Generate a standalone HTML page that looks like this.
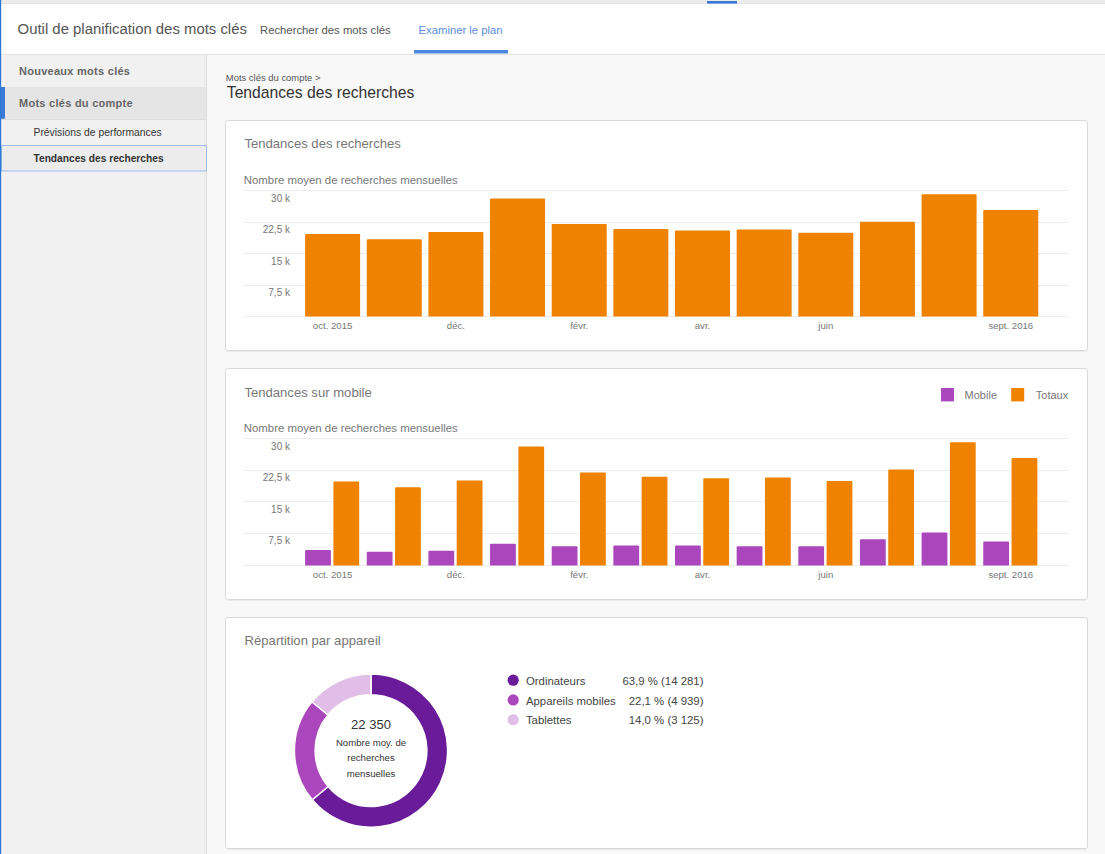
<!DOCTYPE html>
<html><head><meta charset="utf-8"><style>
html,body{margin:0;padding:0;background:#f8f8f8;overflow:hidden}
svg{display:block}
text{font-family:"Liberation Sans",sans-serif}
</style></head><body>
<svg width="1105" height="854" viewBox="0 0 1105 854">

<rect x="0" y="0" width="1105" height="854" fill="#f8f8f8"/>
<rect x="0" y="0" width="1105" height="3" fill="#ececec"/>
<rect x="0" y="3" width="1105" height="1" fill="#e3e3e3"/>
<rect x="707" y="1" width="30" height="2.6" fill="#3a78d8"/>
<rect x="0" y="4" width="1105" height="50" fill="#ffffff"/>
<rect x="0" y="54" width="1105" height="1" fill="#e4e4e4"/>
<text x="17.6" y="33.8" font-size="14.9" fill="#555">Outil de planification des mots clés</text>
<text x="260" y="34.2" font-size="11.3" fill="#555">Rechercher des mots clés</text>
<text x="418.5" y="34.2" font-size="11.3" fill="#5b8ee0">Examiner le plan</text>
<rect x="414" y="50" width="94" height="3.5" fill="#4a87de"/>
<rect x="0" y="55" width="206" height="799" fill="#f1f1f1"/>
<rect x="1" y="55" width="2" height="799" fill="#f6f5f3"/>
<rect x="204" y="55" width="2" height="799" fill="#ececec"/>
<rect x="206" y="55" width="1" height="799" fill="#dedede"/>
<rect x="1" y="87" width="205" height="32" fill="#e5e5e5"/>
<rect x="1" y="119" width="205" height="1" fill="#dcdcdc"/>
<text x="19" y="74.7" font-size="11" font-weight="bold" letter-spacing="0.27" fill="#666">Nouveaux mots clés</text>
<text x="19" y="106.7" font-size="11" font-weight="bold" letter-spacing="0.27" fill="#666">Mots clés du compte</text>
<text x="33.5" y="135.7" font-size="10.35" fill="#333">Prévisions de performances</text>
<rect x="1.5" y="145.5" width="205" height="25.5" fill="#ececec" stroke="#9dbbec" stroke-width="1"/>
<text x="33.5" y="161.8" font-size="10.2" font-weight="bold" fill="#333">Tendances des recherches</text>
<rect x="0" y="87" width="5" height="31.5" fill="#3a7bd5"/>
<rect x="0" y="87" width="5" height="31.5" fill="#3a7bd5"/>
<rect x="0" y="0" width="1.2" height="854" fill="#2a78d8"/>
<text x="225.8" y="81.3" font-size="9.45" fill="#555">Mots clés du compte &gt;</text>
<text x="226.8" y="98.3" font-size="15.7" fill="#333">Tendances des recherches</text>
<rect x="225.5" y="120.5" width="862" height="230" rx="2" fill="#fff" stroke="#d9d9d9" stroke-width="1"/>
<rect x="227" y="351" width="859" height="1" fill="#ececec"/>
<text x="244.4" y="148.3" font-size="13.1" fill="#777">Tendances des recherches</text>
<text x="243.8" y="184" font-size="11.4" fill="#777">Nombre moyen de recherches mensuelles</text>
<rect x="244" y="190" width="824.5" height="1" fill="#ececec"/>
<rect x="244" y="222" width="824.5" height="1" fill="#ececec"/>
<rect x="244" y="253" width="824.5" height="1" fill="#ececec"/>
<rect x="244" y="285" width="824.5" height="1" fill="#ececec"/>
<rect x="244" y="316" width="824.5" height="1" fill="#ececec"/>
<text x="290" y="201.5" font-size="10" fill="#777" text-anchor="end">30 k</text>
<text x="290" y="233" font-size="10" fill="#777" text-anchor="end">22,5 k</text>
<text x="290" y="264.5" font-size="10" fill="#777" text-anchor="end">15 k</text>
<text x="290" y="296" font-size="10" fill="#777" text-anchor="end">7,5 k</text>
<path d="M305.10,316.5 V235 Q305.10,234 306.10,234 H359.10 Q360.10,234 360.10,235 V316.5 Z" fill="#ef8200"/>
<path d="M366.75,316.5 V240.2 Q366.75,239.2 367.75,239.2 H420.75 Q421.75,239.2 421.75,240.2 V316.5 Z" fill="#ef8200"/>
<path d="M428.40,316.5 V233.1 Q428.40,232.1 429.40,232.1 H482.40 Q483.40,232.1 483.40,233.1 V316.5 Z" fill="#ef8200"/>
<path d="M490.05,316.5 V199.5 Q490.05,198.5 491.05,198.5 H544.05 Q545.05,198.5 545.05,199.5 V316.5 Z" fill="#ef8200"/>
<path d="M551.70,316.5 V225 Q551.70,224 552.70,224 H605.70 Q606.70,224 606.70,225 V316.5 Z" fill="#ef8200"/>
<path d="M613.35,316.5 V229.9 Q613.35,228.9 614.35,228.9 H667.35 Q668.35,228.9 668.35,229.9 V316.5 Z" fill="#ef8200"/>
<path d="M675.00,316.5 V231.5 Q675.00,230.5 676.00,230.5 H729.00 Q730.00,230.5 730.00,231.5 V316.5 Z" fill="#ef8200"/>
<path d="M736.65,316.5 V230.5 Q736.65,229.5 737.65,229.5 H790.65 Q791.65,229.5 791.65,230.5 V316.5 Z" fill="#ef8200"/>
<path d="M798.30,316.5 V233.8 Q798.30,232.8 799.30,232.8 H852.30 Q853.30,232.8 853.30,233.8 V316.5 Z" fill="#ef8200"/>
<path d="M859.95,316.5 V222.7 Q859.95,221.7 860.95,221.7 H913.95 Q914.95,221.7 914.95,222.7 V316.5 Z" fill="#ef8200"/>
<path d="M921.60,316.5 V195.3 Q921.60,194.3 922.60,194.3 H975.60 Q976.60,194.3 976.60,195.3 V316.5 Z" fill="#ef8200"/>
<path d="M983.25,316.5 V211 Q983.25,210 984.25,210 H1037.25 Q1038.25,210 1038.25,211 V316.5 Z" fill="#ef8200"/>
<text x="332.6" y="329.3" font-size="9.6" fill="#777" text-anchor="middle">oct. 2015</text>
<text x="455.9" y="329.3" font-size="9.6" fill="#777" text-anchor="middle">déc.</text>
<text x="579.2" y="329.3" font-size="9.6" fill="#777" text-anchor="middle">févr.</text>
<text x="702.5" y="329.3" font-size="9.6" fill="#777" text-anchor="middle">avr.</text>
<text x="825.8" y="329.3" font-size="9.6" fill="#777" text-anchor="middle">juin</text>
<text x="1010.8" y="329.3" font-size="9.6" fill="#777" text-anchor="middle">sept. 2016</text>
<rect x="225.5" y="368.5" width="862" height="231" rx="2" fill="#fff" stroke="#d9d9d9" stroke-width="1"/>
<rect x="227" y="600" width="859" height="1" fill="#ececec"/>
<text x="244.4" y="396.8" font-size="13.1" fill="#777">Tendances sur mobile</text>
<text x="243.8" y="432" font-size="11.4" fill="#777">Nombre moyen de recherches mensuelles</text>
<rect x="244" y="438" width="824.5" height="1" fill="#ececec"/>
<rect x="244" y="470" width="824.5" height="1" fill="#ececec"/>
<rect x="244" y="501" width="824.5" height="1" fill="#ececec"/>
<rect x="244" y="533" width="824.5" height="1" fill="#ececec"/>
<rect x="244" y="565" width="824.5" height="1" fill="#ececec"/>
<text x="290" y="449.5" font-size="10" fill="#777" text-anchor="end">30 k</text>
<text x="290" y="481" font-size="10" fill="#777" text-anchor="end">22,5 k</text>
<text x="290" y="512.5" font-size="10" fill="#777" text-anchor="end">15 k</text>
<text x="290" y="544" font-size="10" fill="#777" text-anchor="end">7,5 k</text>
<path d="M305.10,565.5 V550.9 Q305.10,549.9 306.10,549.9 H329.90 Q330.90,549.9 330.90,550.9 V565.5 Z" fill="#ab47bc"/>
<path d="M333.40,565.5 V482.5 Q333.40,481.5 334.40,481.5 H358.20 Q359.20,481.5 359.20,482.5 V565.5 Z" fill="#ef8200"/>
<path d="M366.75,565.5 V552.7 Q366.75,551.7 367.75,551.7 H391.55 Q392.55,551.7 392.55,552.7 V565.5 Z" fill="#ab47bc"/>
<path d="M395.05,565.5 V488.2 Q395.05,487.2 396.05,487.2 H419.85 Q420.85,487.2 420.85,488.2 V565.5 Z" fill="#ef8200"/>
<path d="M428.40,565.5 V551.8 Q428.40,550.8 429.40,550.8 H453.20 Q454.20,550.8 454.20,551.8 V565.5 Z" fill="#ab47bc"/>
<path d="M456.70,565.5 V481.4 Q456.70,480.4 457.70,480.4 H481.50 Q482.50,480.4 482.50,481.4 V565.5 Z" fill="#ef8200"/>
<path d="M490.05,565.5 V544.8 Q490.05,543.8 491.05,543.8 H514.85 Q515.85,543.8 515.85,544.8 V565.5 Z" fill="#ab47bc"/>
<path d="M518.35,565.5 V447.6 Q518.35,446.6 519.35,446.6 H543.15 Q544.15,446.6 544.15,447.6 V565.5 Z" fill="#ef8200"/>
<path d="M551.70,565.5 V547.2 Q551.70,546.2 552.70,546.2 H576.50 Q577.50,546.2 577.50,547.2 V565.5 Z" fill="#ab47bc"/>
<path d="M580.00,565.5 V473.4 Q580.00,472.4 581.00,472.4 H604.80 Q605.80,472.4 605.80,473.4 V565.5 Z" fill="#ef8200"/>
<path d="M613.35,565.5 V546.4 Q613.35,545.4 614.35,545.4 H638.15 Q639.15,545.4 639.15,546.4 V565.5 Z" fill="#ab47bc"/>
<path d="M641.65,565.5 V477.7 Q641.65,476.7 642.65,476.7 H666.45 Q667.45,476.7 667.45,477.7 V565.5 Z" fill="#ef8200"/>
<path d="M675.00,565.5 V546.4 Q675.00,545.4 676.00,545.4 H699.80 Q700.80,545.4 700.80,546.4 V565.5 Z" fill="#ab47bc"/>
<path d="M703.30,565.5 V479.3 Q703.30,478.3 704.30,478.3 H728.10 Q729.10,478.3 729.10,479.3 V565.5 Z" fill="#ef8200"/>
<path d="M736.65,565.5 V547.2 Q736.65,546.2 737.65,546.2 H761.45 Q762.45,546.2 762.45,547.2 V565.5 Z" fill="#ab47bc"/>
<path d="M764.95,565.5 V478.5 Q764.95,477.5 765.95,477.5 H789.75 Q790.75,477.5 790.75,478.5 V565.5 Z" fill="#ef8200"/>
<path d="M798.30,565.5 V547.2 Q798.30,546.2 799.30,546.2 H823.10 Q824.10,546.2 824.10,547.2 V565.5 Z" fill="#ab47bc"/>
<path d="M826.60,565.5 V482 Q826.60,481 827.60,481 H851.40 Q852.40,481 852.40,482 V565.5 Z" fill="#ef8200"/>
<path d="M859.95,565.5 V540.2 Q859.95,539.2 860.95,539.2 H884.75 Q885.75,539.2 885.75,540.2 V565.5 Z" fill="#ab47bc"/>
<path d="M888.25,565.5 V470.6 Q888.25,469.6 889.25,469.6 H913.05 Q914.05,469.6 914.05,470.6 V565.5 Z" fill="#ef8200"/>
<path d="M921.60,565.5 V533.4 Q921.60,532.4 922.60,532.4 H946.40 Q947.40,532.4 947.40,533.4 V565.5 Z" fill="#ab47bc"/>
<path d="M949.90,565.5 V443.2 Q949.90,442.2 950.90,442.2 H974.70 Q975.70,442.2 975.70,443.2 V565.5 Z" fill="#ef8200"/>
<path d="M983.25,565.5 V542.6 Q983.25,541.6 984.25,541.6 H1008.05 Q1009.05,541.6 1009.05,542.6 V565.5 Z" fill="#ab47bc"/>
<path d="M1011.55,565.5 V459 Q1011.55,458 1012.55,458 H1036.35 Q1037.35,458 1037.35,459 V565.5 Z" fill="#ef8200"/>
<text x="332.6" y="578.0" font-size="9.6" fill="#777" text-anchor="middle">oct. 2015</text>
<text x="455.9" y="578.0" font-size="9.6" fill="#777" text-anchor="middle">déc.</text>
<text x="579.2" y="578.0" font-size="9.6" fill="#777" text-anchor="middle">févr.</text>
<text x="702.5" y="578.0" font-size="9.6" fill="#777" text-anchor="middle">avr.</text>
<text x="825.8" y="578.0" font-size="9.6" fill="#777" text-anchor="middle">juin</text>
<text x="1010.8" y="578.0" font-size="9.6" fill="#777" text-anchor="middle">sept. 2016</text>
<rect x="941" y="388" width="13" height="13.4" fill="#ab47bc"/>
<text x="964.6" y="398.9" font-size="11" fill="#777">Mobile</text>
<rect x="1011.2" y="388" width="13" height="13.4" fill="#ef8200"/>
<text x="1035.8" y="398.9" font-size="11" fill="#777">Totaux</text>
<rect x="225.5" y="617.5" width="862" height="231" rx="2" fill="#fff" stroke="#d9d9d9" stroke-width="1"/>
<rect x="227" y="849" width="859" height="1" fill="#ececec"/>
<text x="244.6" y="645.4" font-size="13.1" fill="#777">Répartition par appareil</text>
<path d="M371.00,674.00 A76.6,76.6 0 1 1 312.29,799.80 L328.15,786.50 A55.9,55.9 0 1 0 371.00,694.70 Z" fill="#6a1b9a" stroke="#fff" stroke-width="1.5"/>
<path d="M312.29,799.80 A76.6,76.6 0 0 1 311.98,701.77 L327.93,714.97 A55.9,55.9 0 0 0 328.15,786.50 Z" fill="#ab47bc" stroke="#fff" stroke-width="1.5"/>
<path d="M311.98,701.77 A76.6,76.6 0 0 1 371.00,674.00 L371.00,694.70 A55.9,55.9 0 0 0 327.93,714.97 Z" fill="#e1bee7" stroke="#fff" stroke-width="1.5"/>
<text x="371" y="728.7" font-size="13" fill="#333" text-anchor="middle">22 350</text>
<text x="371" y="745.5" font-size="9.6" fill="#333" text-anchor="middle">Nombre moy. de</text>
<text x="371" y="761.3" font-size="9.6" fill="#333" text-anchor="middle">recherches</text>
<text x="371" y="776.9" font-size="9.6" fill="#333" text-anchor="middle">mensuelles</text>
<circle cx="513.2" cy="680.20" r="5.6" fill="#6a1b9a"/>
<text x="525.9" y="684.90" font-size="11.4" fill="#444">Ordinateurs</text>
<text x="703.5" y="684.90" font-size="11.4" fill="#444" text-anchor="end">63,9 % (14 281)</text>
<circle cx="513.2" cy="699.95" r="5.6" fill="#ab47bc"/>
<text x="525.9" y="704.65" font-size="11.4" fill="#444">Appareils mobiles</text>
<text x="703.5" y="704.65" font-size="11.4" fill="#444" text-anchor="end">22,1 % (4 939)</text>
<circle cx="513.2" cy="719.70" r="5.6" fill="#e1bee7"/>
<text x="525.9" y="724.40" font-size="11.4" fill="#444">Tablettes</text>
<text x="703.5" y="724.40" font-size="11.4" fill="#444" text-anchor="end">14,0 % (3 125)</text>
</svg></body></html>
